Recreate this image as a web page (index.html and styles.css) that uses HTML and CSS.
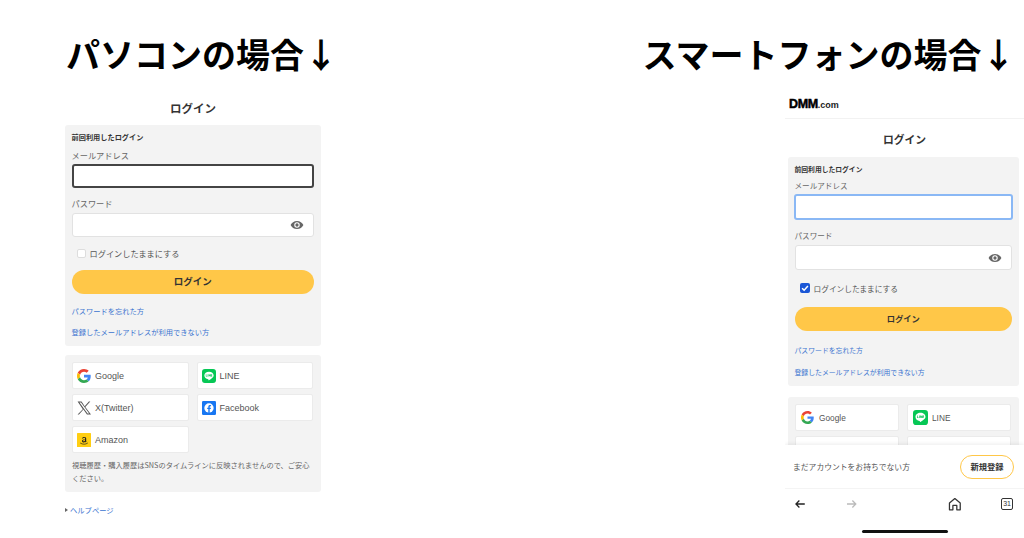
FILE: index.html
```html
<!DOCTYPE html>
<html lang="ja">
<head>
  <meta charset="UTF-8" />
  <title>ログイン画面</title>
  <link rel="stylesheet" href="styles.css">
</head>
<body>

  <!-- 共通アイコン -->
  <svg class="defs" width="0" height="0">
    <symbol id="i-eye" viewBox="0 0 24 24">
      <path fill="#666" d="M12 5C7 5 2.700 8.100 1 12c1.700 3.900 6 7 11 7s9.300-3.100 11-7c-1.700-3.900-6-7-11-7zm0 11.700a4.700 4.700 0 1 1 0-9.400 4.700 4.700 0 0 1 0 9.400zm0-7.500a2.800 2.800 0 1 0 0 5.600 2.800 2.800 0 0 0 0-5.600z"/>
    </symbol>
    <symbol id="i-google" viewBox="0 0 48 48">
      <path fill="#EA4335" d="M24 9.500c3.500 0 6.700 1.200 9.200 3.600l6.900-6.900C35.900 2.400 30.500 0 24 0 14.600 0 6.500 5.400 2.600 13.200l8 6.200C12.500 13.600 17.800 9.500 24 9.500z"/>
      <path fill="#4285F4" d="M47 24.500c0-1.600-.1-3.100-.4-4.500H24v9h12.900c-.6 3-2.200 5.500-4.700 7.200l7.700 6C44.400 38 47 31.800 47 24.500z"/>
      <path fill="#FBBC05" d="M10.500 28.600c-.5-1.400-.8-3-.8-4.600s.3-3.200.8-4.600l-8-6.200C.9 16.500 0 20.100 0 24s.9 7.500 2.600 10.800l7.900-6.200z"/>
      <path fill="#34A853" d="M24 48c6.500 0 11.900-2.100 15.900-5.800l-7.700-6c-2.200 1.500-5 2.300-8.200 2.300-6.200 0-11.500-4.100-13.400-9.900l-8 6.200C6.500 42.600 14.600 48 24 48z"/>
    </symbol>
    <symbol id="i-line" viewBox="0 0 24 24">
      <rect width="24" height="24" rx="5" fill="#06c755"/>
      <path fill="#fff" d="M12 4.500c-4.500 0-8 2.900-8 6.500 0 3.200 2.800 5.900 6.600 6.400.6.100.5.600.4 1.300-.1.500.2.700.8.400 1.800-1 4.300-2.500 6-4.200 1.400-1.300 2.200-2.600 2.200-3.900 0-3.600-3.500-6.500-8-6.500z"/>
      <path fill="#06c755" d="M7 9h1v3h1.500v1H7zm3.200 0h1v4h-1zm1.800 0h1l1.300 2V9h1v4h-1l-1.300-2v2h-1zm3.700 0H18v1h-1.300v.6H18v.9h-1.300v.5H18v1h-2.300z" transform="translate(-.5 -.2)"/>
    </symbol>
    <symbol id="i-x" viewBox="0 0 24 24">
      <path fill="#555" d="M14.200 10.400 22.800 1h-2.400l-7.200 8.100L7.800 1H1l9 13.100L1 23h2.400l7.600-8.500 6.100 8.500H24zM4.200 2.700h2.700l13.900 18.700h-2.700z"/>
    </symbol>
    <symbol id="i-facebook" viewBox="0 0 24 24">
      <rect width="24" height="24" rx="2" fill="#1877f2"/>
      <circle cx="12" cy="12" r="8" fill="#fff"/>
      <path fill="#1877f2" d="M10.800 20.500v-6.700H8.900v-2.300h1.900V9.900c0-2 1.100-3 3-3 .6 0 1.200.1 1.700.2v2h-1c-.9 0-1.300.4-1.300 1.200v1.200h2.200l-.4 2.300h-1.800v6.700z"/>
    </symbol>
    <symbol id="i-amazon" viewBox="0 0 24 24">
      <rect width="24" height="24" rx="1" fill="#ffce12"/>
      <path fill="#222" d="M13.800 10c0-1-.4-1.700-1.700-1.700-1 0-1.600.5-1.800 1.300l-1.900-.2c.3-1.700 1.800-2.700 3.800-2.700 2.300 0 3.600 1.100 3.600 3.100v3.800c0 .5.200.9.600 1.300l-1.400 1.200c-.4-.3-.7-.7-.9-1.100-.6.800-1.500 1.300-2.500 1.300-1.800 0-3-1-3-2.600 0-2.200 2-3.100 5.300-3.200zm0 1.500c-2 .1-3.200.6-3.200 1.800 0 .8.500 1.200 1.200 1.200 1.200 0 2-1.200 2-3z"/>
      <path fill="none" stroke="#222" stroke-width="1.200" stroke-linecap="round" d="M6 17.500c3.800 2.400 8.600 2.400 12 0"/>
    </symbol>
  </svg>

  <div class="headings">
    <h1>パソコンの場合↓</h1>
    <h1>スマートフォンの場合↓</h1>
  </div>

  <div class="columns">

    <!-- パソコン -->
    <section class="shot pc">
      <h2 class="title">ログイン</h2>
      <div class="card login">
        <div class="last">前回利用したログイン</div>
        <label class="lbl mail-lbl">メールアドレス</label>
        <div class="field focus"></div>
        <label class="lbl pw-lbl">パスワード</label>
        <div class="field pw"><svg class="eye"><use href="#i-eye"/></svg></div>
        <div class="keep"><span class="check"></span>ログインしたままにする</div>
        <div class="submit">ログイン</div>
        <a class="link first">パスワードを忘れた方</a>
        <a class="link second">登録したメールアドレスが利用できない方</a>
      </div>
      <div class="card social">
        <div class="sns">
          <div class="sns-btn"><svg><use href="#i-google"/></svg>Google</div>
          <div class="sns-btn"><svg><use href="#i-line"/></svg>LINE</div>
          <div class="sns-btn"><svg><use href="#i-x"/></svg>X(Twitter)</div>
          <div class="sns-btn"><svg><use href="#i-facebook"/></svg>Facebook</div>
          <div class="sns-btn"><svg><use href="#i-amazon"/></svg>Amazon</div>
        </div>
        <p class="note">視聴履歴・購入履歴はSNSのタイムラインに反映されませんので、ご安心ください。</p>
      </div>
      <a class="help"><span class="tri"></span>ヘルプページ</a>
    </section>

    <!-- スマートフォン -->
    <section class="shot sp">
      <div class="logo"><b>DMM</b>.com</div>
      <h2 class="title">ログイン</h2>
      <div class="card login">
        <div class="last">前回利用したログイン</div>
        <label class="lbl mail-lbl">メールアドレス</label>
        <div class="field focus"></div>
        <label class="lbl pw-lbl">パスワード</label>
        <div class="field pw"><svg class="eye"><use href="#i-eye"/></svg></div>
        <div class="keep">
          <span class="check on"><svg viewBox="0 0 12 12"><path d="M2.500 6.200 5 8.700l4.500-5" fill="none" stroke="#fff" stroke-width="1.800"/></svg></span>ログインしたままにする
        </div>
        <div class="submit">ログイン</div>
        <a class="link first">パスワードを忘れた方</a>
        <a class="link second">登録したメールアドレスが利用できない方</a>
      </div>
      <div class="card social">
        <div class="sns">
          <div class="sns-btn"><svg><use href="#i-google"/></svg>Google</div>
          <div class="sns-btn"><svg class="big"><use href="#i-line"/></svg>LINE</div>
          <div class="sns-btn"></div>
          <div class="sns-btn"></div>
        </div>
      </div>

      <!-- 画面下に固定されるバー -->
      <div class="bottom">
        <div class="signup">
          <span>まだアカウントをお持ちでない方</span>
          <span class="signup-btn">新規登録</span>
        </div>
        <div class="nav">
          <svg viewBox="0 0 12 12"><path d="M11 6H2M5.500 2.500 2 6l3.500 3.500" fill="none" stroke="#222" stroke-width="1.300"/></svg>
          <svg viewBox="0 0 12 12"><path d="M1 6h9M6.500 2.500 10 6 6.500 9.500" fill="none" stroke="#bbb" stroke-width="1.300"/></svg>
          <svg class="home" viewBox="0 0 14 14"><path d="M1.500 13V6L7 1.500 12.500 6v7H9V8.500H5V13z" fill="none" stroke="#333" stroke-width="1.300" stroke-linejoin="round"/></svg>
          <span class="tabs">31</span>
        </div>
        <div class="indicator"></div>
      </div>
    </section>

  </div>
</body>
</html>
```

FILE: styles.css
```css
* {
  box-sizing: border-box;
}

html, body {
  height: 538px;
}

body {
  margin: 0;
  background: #fff;
  color: #333;
  font-family: "Noto Sans CJK JP", "Noto Sans", sans-serif;
  overflow: hidden;
}

.defs {
  display: block;
  height: 0;
}

.headings {
  display: flex;
  justify-content: space-between;
  height: 95px;
  padding: 32px 8.500px 0 66px;
}

h1 {
  margin: 0;
  font-size: 34px;
  line-height: 44px;
  font-weight: 700;
  color: #000;
}

.columns {
  display: flex;
  justify-content: space-between;
  height: 443px;
  padding-left: 65px;
}

.shot {
  display: flex;
  flex-direction: column;
}

.pc {
  width: 256px;
}

.sp {
  position: relative;
  width: 239px;
  overflow: hidden;
}

.title {
  margin: 5px 0 0;
  height: 25px;
  font-size: 11.500px;
  line-height: 16px;
  font-weight: 700;
  text-align: center;
  color: #333;
}

.card {
  background: #f3f3f3;
  border-radius: 3px;
  padding: 7px 8px 7px 7px;
  flex-shrink: 0;
}

.login {
  display: flex;
  flex-direction: column;
  padding: 7px 7px 7px 6.500px;
}

.last {
  font-size: 7.200px;
  line-height: 10px;
  font-weight: 700;
  color: #333;
}

.lbl {
  font-size: 8.200px;
  line-height: 10px;
  color: #666;
}

.mail-lbl {
  margin-top: 8px;
}

.pw-lbl {
  margin-top: 10px;
}

.field {
  display: flex;
  align-items: center;
  justify-content: flex-end;
  height: 24px;
  margin-top: 4px;
  padding-right: 9px;
  background: #fff;
  border: 1px solid #e2e2e2;
  border-radius: 3px;
}

.field.focus {
  border: 2px solid #444;
}

.field.pw {
  margin-top: 5px;
}

.eye {
  width: 14px;
  height: 14px;
}

.keep {
  display: flex;
  align-items: center;
  height: 12px;
  margin-top: 10px;
  padding-left: 5px;
  font-size: 8.200px;
  color: #555;
}

.check {
  display: block;
  width: 9px;
  height: 9px;
  margin-right: 4px;
  background: #fff;
  border: 1px solid #ddd;
  border-radius: 2px;
}

.check.on {
  background: #1a56d6;
  border: 0;
}

.check svg {
  display: block;
}

.submit {
  height: 24px;
  margin-top: 11px;
  background: #ffc748;
  border-radius: 12px;
  font-size: 9.500px;
  font-weight: 700;
  line-height: 22px;
  text-align: center;
  color: #333;
}

.link {
  font-size: 7.250px;
  line-height: 10px;
  color: #3b74d0;
}

.link.first {
  margin-top: 12px;
}

.link.second {
  margin-top: 11px;
}

.login .link.second {
  margin-bottom: 2px;
}

.social {
  margin-top: 9px;
}

.sns {
  display: grid;
  grid-template-columns: 1fr 1fr;
  gap: 5px 8px;
}

.sns-btn {
  display: flex;
  align-items: center;
  height: 27px;
  padding-left: 4px;
  background: #fff;
  border: 1px solid #ebebeb;
  border-radius: 2px;
  font-family: "Liberation Sans", sans-serif;
  font-size: 9px;
  color: #555;
}

.sns-btn svg {
  width: 14px;
  height: 14px;
  margin-right: 4px;
}

.note {
  margin: 6px 0 0;
  font-size: 7.250px;
  line-height: 13px;
  color: #666;
}

.help {
  display: flex;
  align-items: center;
  margin-top: 12px;
  font-size: 7.300px;
  line-height: 12px;
  color: #3b74d0;
}

.tri {
  width: 0;
  height: 0;
  margin-right: 2px;
  border-left: 3px solid #666;
  border-top: 2px solid transparent;
  border-bottom: 2px solid transparent;
}

/* スマートフォン側の差分 */
.logo {
  height: 24px;
  padding: 2px 0 0 4px;
  border-bottom: 1px solid #f2f2f2;
  font-family: "Liberation Sans", sans-serif;
  font-size: 9px;
  line-height: 14px;
  font-weight: 700;
  color: #222;
  flex-shrink: 0;
}

.logo b {
  font-size: 12.500px;
  font-weight: 700;
  letter-spacing: -0.400px;
  color: #000;
  -webkit-text-stroke: 0.500px #000;
}

.sp .title {
  margin-top: 12px;
  height: 26px;
  font-size: 10.800px;
  flex-shrink: 0;
}

.sp .card {
  margin: 0 5px 0 3px;
}

.sp .last {
  font-size: 6.800px;
}

.sp .lbl {
  font-size: 7.600px;
}

.sp .mail-lbl {
  margin-top: 7px;
}

.sp .field.focus {
  height: 26px;
  margin: 3px -1px 0 -1px;
  background: #fff;
  border-color: #8ab8f5;
}

.sp .pw-lbl {
  margin-top: 11px;
}

.sp .field.pw {
  height: 25px;
  margin-top: 4px;
}

.sp .keep {
  margin-top: 12px;
  font-size: 7.700px;
}

.sp .check {
  width: 10px;
  height: 10px;
}

.sp .submit {
  margin-top: 13px;
  font-size: 8.300px;
}

.sp .link.first {
  margin-top: 14px;
}

.sp .link.second {
  margin-top: 12px;
}

.sp .link {
  font-size: 6.850px;
}

.sp .social {
  margin-top: 11px;
}

.sp .sns-btn {
  padding-left: 5px;
  font-size: 8.300px;
}

.sp .sns-btn svg {
  width: 13px;
  height: 13px;
  margin-right: 5px;
}

.sp .sns-btn svg.big {
  width: 15px;
  height: 15px;
  margin-right: 4px;
}

.bottom {
  position: absolute;
  left: 0;
  right: 0;
  bottom: 0;
  height: 93px;
  background: #fff;
  box-shadow: 0 -1px 4px rgba(0, 0, 0, 0.08);
}

.signup {
  display: flex;
  align-items: center;
  justify-content: space-between;
  height: 44px;
  padding: 0 10px 0 8px;
  border-bottom: 1px solid #f4f4f4;
  font-size: 7.800px;
  color: #555;
}

.signup-btn {
  width: 54px;
  height: 24px;
  border: 1.500px solid #ffc748;
  border-radius: 12px;
  font-size: 8.300px;
  font-weight: 700;
  line-height: 21px;
  text-align: center;
  color: #333;
}

.nav {
  display: flex;
  align-items: center;
  height: 30px;
  padding: 0 11px 0 9px;
}

.nav svg {
  width: 12px;
  height: 12px;
  margin-right: 40px;
}

.nav svg.home {
  width: 14px;
  height: 14px;
  margin: 0 40px 0 50px;
}

.tabs {
  width: 12px;
  height: 12px;
  border: 1.200px solid #333;
  border-radius: 2px;
  font-family: "Liberation Sans", sans-serif;
  font-size: 7px;
  line-height: 10px;
  text-align: center;
}

.indicator {
  width: 86px;
  height: 3px;
  margin: 11px auto 0;
  background: #111;
  border-radius: 2px;
}
```
